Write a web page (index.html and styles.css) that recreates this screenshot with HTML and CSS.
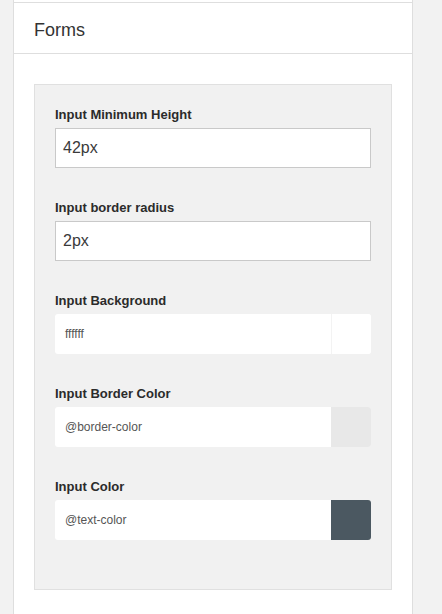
FILE: index.html
```html
<!DOCTYPE html>
<html>
<head>
<meta charset="utf-8">
<link rel="stylesheet" href="styles.css">
</head>
<body>
<div class="panel">
  <div class="prev"></div>
  <div class="panel-head">Forms</div>
  <div class="panel-body">
    <div class="box">
      <div class="group">
        <label class="lbl">Input Minimum Height</label>
        <div class="text-input">42px</div>
      </div>
      <div class="group">
        <label class="lbl">Input border radius</label>
        <div class="text-input">2px</div>
      </div>
      <div class="group">
        <label class="lbl">Input Background</label>
        <div class="color-input">
          <span class="val">ffffff</span>
          <span class="swatch sw-white"></span>
        </div>
      </div>
      <div class="group">
        <label class="lbl">Input Border Color</label>
        <div class="color-input">
          <span class="val">@border-color</span>
          <span class="swatch sw-border"></span>
        </div>
      </div>
      <div class="group last">
        <label class="lbl">Input Color</label>
        <div class="color-input">
          <span class="val">@text-color</span>
          <span class="swatch sw-text"></span>
        </div>
      </div>
    </div>
  </div>
</div>
</body>
</html>
```
FILE: styles.css
```css
html, body {
  margin: 0;
  padding: 0;
  background: #f2f2f2;
  font-family: "Liberation Sans", Arial, Helvetica, sans-serif;
  color: #333;
}
.panel {
  margin-left: 13px;
  width: 398px;
  min-height: 100vh;
  background: #fff;
  border-left: 1px solid #dedede;
  border-right: 1px solid #dedede;
}
.prev {
  height: 2px;
}
.panel-head {
  border-top: 1px solid #dedede;
  border-bottom: 1px solid #dedede;
  padding: 16px 20px 12px 20px;
  font-size: 18px;
  line-height: 22px;
  color: #333;
}
.panel-body {
  padding: 30px 20px 20px 20px;
}
.box {
  background: #f1f1f1;
  border: 1px solid #e0e0e0;
  padding: 20px 20px 49px 20px;
}
.group {
  margin-bottom: 30px;
}
.group.last {
  margin-bottom: 0;
}
.lbl {
  display: block;
  font-size: 13px;
  font-weight: bold;
  line-height: 20px;
  color: #2b2b2b;
  margin-bottom: 3px;
}
.text-input {
  box-sizing: border-box;
  height: 40px;
  border: 1px solid #c9c9c9;
  background: #fff;
  padding: 0 7px;
  font-size: 16px;
  line-height: 38px;
  color: #3a3a3a;
}
.color-input {
  display: flex;
  height: 40px;
  background: #fff;
  border-radius: 3px;
  overflow: hidden;
}
.val {
  flex: 1;
  padding-left: 10px;
  font-size: 12px;
  line-height: 40px;
  color: #555;
}
.swatch {
  width: 40px;
  height: 40px;
}
.sw-white {
  background: #fff;
  border-left: 1px solid #f3f3f3;
  width: 39px;
}
.sw-border {
  background: #e8e8e8;
}
.sw-text {
  background: #4b5861;
}
```
